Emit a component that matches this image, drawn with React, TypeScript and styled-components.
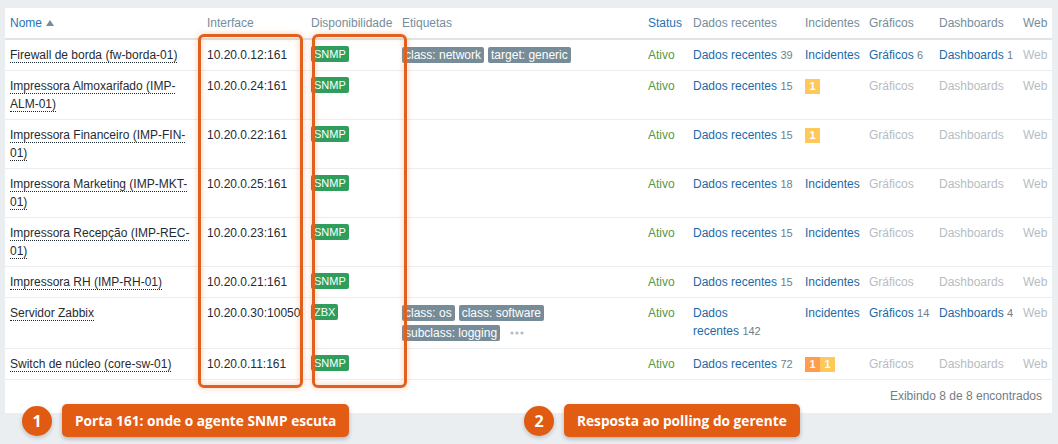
import React from 'react';
import styled, {createGlobalStyle} from 'styled-components';

type Severity = 'average' | 'warning';

interface HostRow {
    name: string;
    iface: string;
    avail: string;
    tags: string[];
    more?: boolean;
    latest: number;
    problems: Severity[];
    graphs?: number;
    dashboards?: number;
}

const hosts: HostRow[] = [
    {name: 'Firewall de borda (fw-borda-01)', iface: '10.20.0.12:161', avail: 'SNMP', tags: ['class: network', 'target: generic'], latest: 39, problems: [], graphs: 6, dashboards: 1},
    {name: 'Impressora Almoxarifado (IMP-ALM-01)', iface: '10.20.0.24:161', avail: 'SNMP', tags: [], latest: 15, problems: ['warning']},
    {name: 'Impressora Financeiro (IMP-FIN-01)', iface: '10.20.0.22:161', avail: 'SNMP', tags: [], latest: 15, problems: ['warning']},
    {name: 'Impressora Marketing (IMP-MKT-01)', iface: '10.20.0.25:161', avail: 'SNMP', tags: [], latest: 18, problems: []},
    {name: 'Impressora Recepção (IMP-REC-01)', iface: '10.20.0.23:161', avail: 'SNMP', tags: [], latest: 15, problems: []},
    {name: 'Impressora RH (IMP-RH-01)', iface: '10.20.0.21:161', avail: 'SNMP', tags: [], latest: 15, problems: []},
    {name: 'Servidor Zabbix', iface: '10.20.0.30:10050', avail: 'ZBX', tags: ['class: os', 'class: software', 'subclass: logging'], more: true, latest: 142, problems: [], graphs: 14, dashboards: 4},
    {name: 'Switch de núcleo (core-sw-01)', iface: '10.20.0.11:161', avail: 'SNMP', tags: [], latest: 72, problems: ['average', 'warning']},
];

const columns = [
    {title: 'Nome', width: 197, sorted: true},
    {title: 'Interface', width: 104},
    {title: 'Disponibilidade', width: 91},
    {title: 'Etiquetas', width: 246},
    {title: 'Status', width: 45, active: true},
    {title: 'Dados recentes', width: 112},
    {title: 'Incidentes', width: 64},
    {title: 'Gráficos', width: 70},
    {title: 'Dashboards', width: 84},
    {title: 'Web', width: 34},
];

const App: React.FC = () => {
    return (
        <Page>
            <GlobalStyle/>
            <Panel>
                <HostTable>
                    <colgroup>
                        {columns.map((c) => <col key={c.title} style={{width: c.width}}/>)}
                    </colgroup>
                    <thead>
                    <tr>
                        {columns.map((c) => (
                            <HeadCell key={c.title} $active={c.sorted || c.active}>
                                {c.title}
                                {c.sorted && <SortArrow/>}
                            </HeadCell>
                        ))}
                    </tr>
                    </thead>
                    <tbody>
                    {hosts.map((h) => (
                        <tr key={h.name}>
                            <Cell><HostName>{h.name}</HostName></Cell>
                            <Cell $nowrap>{h.iface}</Cell>
                            <Cell><AvailBadge>{h.avail}</AvailBadge></Cell>
                            <Cell>
                                {h.tags.length > 0 && (
                                    <TagList>
                                        {h.tags.map((t) => <Tag key={t}>{t}</Tag>)}
                                        {h.more && (
                                            <MoreButton>
                                                <svg width="14" height="4" viewBox="0 0 14 4">
                                                    <circle cx="2" cy="2" r="1.6" fill="#b3bcc2"/>
                                                    <circle cx="7" cy="2" r="1.6" fill="#b3bcc2"/>
                                                    <circle cx="12" cy="2" r="1.6" fill="#b3bcc2"/>
                                                </svg>
                                            </MoreButton>
                                        )}
                                    </TagList>
                                )}
                            </Cell>
                            <Cell><StatusText>Ativo</StatusText></Cell>
                            <Cell>
                                <Link>Dados recentes</Link>{'\u00a0'}<Count>{h.latest}</Count>
                            </Cell>
                            <Cell $nowrap>
                                {h.problems.length > 0
                                    ? h.problems.map((p, i) => <ProblemBadge key={i} $severity={p}>1</ProblemBadge>)
                                    : <Link>Incidentes</Link>}
                            </Cell>
                            <Cell $nowrap>
                                {h.graphs
                                    ? <><Link>Gráficos</Link> <Count>{h.graphs}</Count></>
                                    : <Disabled>Gráficos</Disabled>}
                            </Cell>
                            <Cell $nowrap>
                                {h.dashboards
                                    ? <><Link>Dashboards</Link> <Count>{h.dashboards}</Count></>
                                    : <Disabled>Dashboards</Disabled>}
                            </Cell>
                            <Cell><Disabled>Web</Disabled></Cell>
                        </tr>
                    ))}
                    </tbody>
                </HostTable>
                <Footer>Exibindo 8 de 8 encontrados</Footer>
            </Panel>

            <Highlight $left={198} $width={105}/>
            <Highlight $left={312} $width={95}/>

            <Callout $left={22}>
                <CalloutNumber>1</CalloutNumber>
                <CalloutLabel>Porta 161: onde o agente SNMP escuta</CalloutLabel>
            </Callout>
            <Callout $left={524}>
                <CalloutNumber>2</CalloutNumber>
                <CalloutLabel>Resposta ao polling do gerente</CalloutLabel>
            </Callout>
        </Page>
    );
};

const GlobalStyle = createGlobalStyle`
  body {
    margin: 0;
    background: #ebeef0;
    font-family: 'Liberation Sans', Arial, sans-serif;
  }
`;

const Page = styled.div`
  position: relative;
  width: 1058px;
  height: 444px;
  padding: 8px 6px 0 5px;
  box-sizing: border-box;
  overflow: hidden;
`;

const Panel = styled.div`
  background: #ffffff;
`;

const HostTable = styled.table`
  width: 100%;
  border-collapse: collapse;
  table-layout: fixed;
  font-size: 12px;
  color: #1f2c33;
`;

const HeadCell = styled.th<{ $active?: boolean }>`
  text-align: left;
  font-weight: normal;
  white-space: nowrap;
  padding: 6px 5px;
  line-height: 18px;
  color: ${(props) => props.$active ? '#1f75b4' : '#768d99'};
  border-bottom: 2px solid #dfe4e7;
`;

const SortArrow = styled.span`
  display: inline-block;
  margin-left: 4px;
  vertical-align: 1px;
  border-left: 4px solid transparent;
  border-right: 4px solid transparent;
  border-bottom: 6px solid #768d99;
`;

const Cell = styled.td<{ $nowrap?: boolean }>`
  padding: 6px 5px;
  line-height: 18px;
  vertical-align: top;
  border-bottom: 1px solid #ebeef0;
  white-space: ${(props) => props.$nowrap ? 'nowrap' : 'normal'};
`;

const HostName = styled.span`
  color: #1f2c33;
  border-bottom: 1px dotted #1f2c33;
`;

const AvailBadge = styled.span`
  display: inline-block;
  vertical-align: top;
  height: 16px;
  line-height: 16px;
  padding: 0 3px;
  border-radius: 2px;
  background: #2f9e5c;
  color: #ffffff;
  font-size: 11px;
`;

const TagList = styled.div`
  display: flex;
  flex-wrap: wrap;
  align-items: center;
  gap: 4px;
  padding: 1px 0;
`;

const Tag = styled.span`
  height: 16px;
  line-height: 16px;
  padding: 0 3px;
  border-radius: 2px;
  background: #768d99;
  color: #ffffff;
  white-space: nowrap;
`;

const MoreButton = styled.span`
  display: flex;
  align-items: center;
  margin-left: 6px;
`;

const StatusText = styled.span`
  color: #529a48;
`;

const Link = styled.span`
  color: #1c6aa8;
`;

const Count = styled.span`
  color: #6f808a;
  font-size: 11px;
`;

const Disabled = styled.span`
  color: #b5bdc3;
`;

const ProblemBadge = styled.span<{ $severity: Severity }>`
  display: inline-block;
  vertical-align: top;
  margin-top: 2px;
  width: 15px;
  height: 15px;
  line-height: 15px;
  text-align: center;
  font-size: 11px;
  font-weight: bold;
  color: #ffffff;
  background: ${(props) => props.$severity === 'average' ? '#ff9c4d' : '#ffc859'};
`;

const Footer = styled.div`
  height: 33px;
  line-height: 33px;
  padding-right: 10px;
  text-align: right;
  font-size: 12px;
  color: #717d86;
`;

const Highlight = styled.div<{ $left: number; $width: number }>`
  position: absolute;
  top: 34px;
  left: ${(props) => props.$left}px;
  width: ${(props) => props.$width}px;
  height: 354px;
  box-sizing: border-box;
  border: 3px solid #e0611d;
  border-radius: 6px;
  box-shadow: 0 0 4px 2px rgba(240, 120, 60, 0.2), inset 0 0 4px 2px rgba(240, 120, 60, 0.2);
  pointer-events: none;
`;

const Callout = styled.div<{ $left: number }>`
  position: absolute;
  top: 404px;
  left: ${(props) => props.$left}px;
  display: flex;
  align-items: center;
  gap: 10px;
  font-family: 'Open Sans', 'Liberation Sans', sans-serif;
  font-weight: 700;
  color: #ffffff;
`;

const CalloutNumber = styled.div`
  width: 30px;
  height: 30px;
  border-radius: 50%;
  background: #e05a12;
  display: flex;
  align-items: center;
  justify-content: center;
  font-size: 16px;
  box-shadow: 0 2px 4px rgba(0, 0, 0, 0.2);
`;

const CalloutLabel = styled.div`
  height: 33px;
  line-height: 33px;
  padding: 0 13px;
  border-radius: 5px;
  background: #e35c14;
  font-size: 13.7px;
  white-space: nowrap;
  box-shadow: 0 2px 4px rgba(0, 0, 0, 0.25);
`;

export default App;
